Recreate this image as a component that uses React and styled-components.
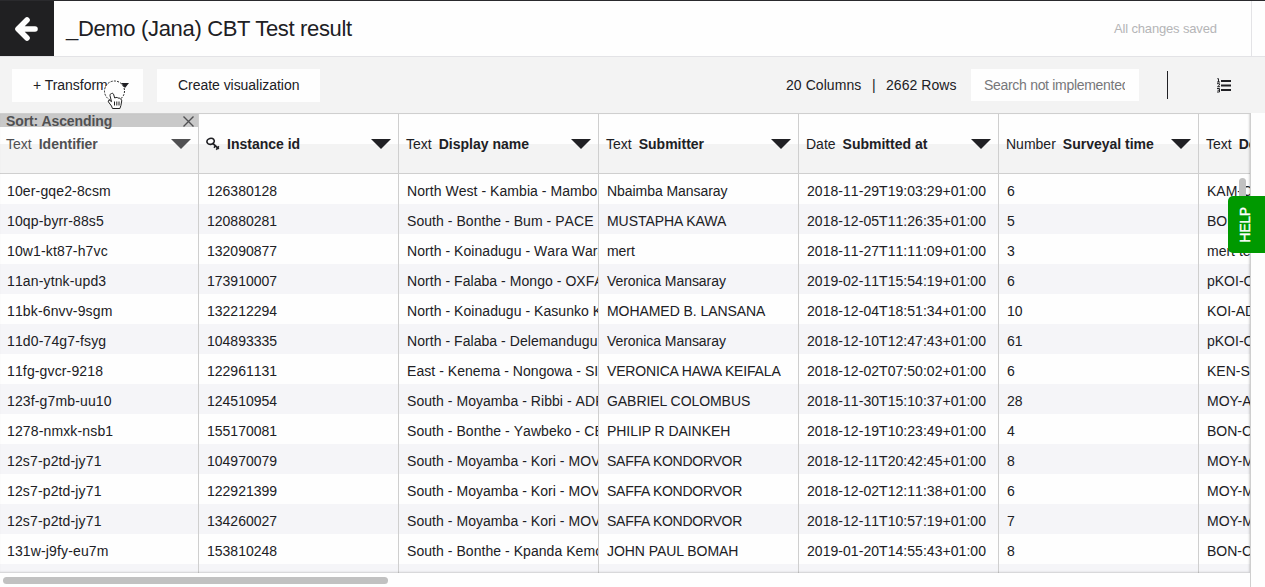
import React from 'react';
import styled, { createGlobalStyle } from 'styled-components';

const GlobalStyle = createGlobalStyle`
  * { box-sizing: border-box; }
  body {
    margin: 0;
    overflow: hidden;
    background: #fefefe;
    color: #202024;
    font-family: "Liberation Sans", Arial, sans-serif;
    font-size: 14px;
  }
`;

const Page = styled.div`
  position: relative;
  display: flex;
  flex-direction: column;
  width: 1265px;
  height: 587px;
  overflow: hidden;
`;

const TopBar = styled.header`
  display: flex;
  height: 57px;
  flex: none;
  border-top: 1px solid #2a2a2d;
  border-bottom: 1px solid #e3e3e6;
`;

const BackButton = styled.div`
  display: flex;
  align-items: center;
  justify-content: center;
  width: 54px;
  height: 55px;
  background: #202022;
`;

const Title = styled.h1`
  flex: 1;
  margin: 0;
  padding-left: 12px;
  font-size: 22px;
  font-weight: 400;
  line-height: 55px;
  letter-spacing: -0.33px;
  white-space: nowrap;
`;

const SaveState = styled.div`
  width: 138px;
  border-right: 1px solid #e3e3e6;
  color: #b5b5b7;
  font-size: 13px;
  line-height: 55px;
  letter-spacing: -0.16px;
  white-space: nowrap;
`;

const TopBarEnd = styled.div`
  width: 13px;
`;

const Toolbar = styled.div`
  display: flex;
  align-items: center;
  flex: none;
  height: 56px;
  padding-left: 12px;
  background: #f3f3f3;
`;

const ToolButton = styled.div`
  display: flex;
  align-items: center;
  justify-content: space-between;
  width: ${(p) => p.$width}px;
  height: 33px;
  margin-right: 14px;
  padding: 0 ${(p) => p.$right}px 0 21px;
  background: #fefefe;
  letter-spacing: -0.04px;
  white-space: nowrap;
`;

const SmallCaret = styled.span`
  border: 4px solid transparent;
  border-top: 5px solid #202024;
  border-bottom: 0;
`;

const Counts = styled.div`
  display: flex;
  margin-left: auto;
  white-space: nowrap;
`;

const CountItem = styled.div`
  width: ${(p) => p.$width}px;
  letter-spacing: 0.06px;
`;

const SearchBox = styled.div`
  width: 168px;
  height: 32px;
  padding: 0 14px 0 13px;
  background: #fefefe;
  color: #77777a;
  line-height: 32px;
`;

const SearchText = styled.div`
  overflow: hidden;
  white-space: nowrap;
  letter-spacing: -0.3px;
`;

const Divider = styled.div`
  width: 1px;
  height: 28px;
  margin: 0 49px 0 28px;
  background: #202024;
`;

const ListIcon = styled.svg`
  width: 15px;
  height: 16px;
  margin-right: 33px;
`;

const TableArea = styled.main`
  position: relative;
  flex: none;
  width: 1251px;
  height: 474px;
  overflow: hidden;
  border-right: 1px solid #cfcfcf;
`;

const Grid = styled.div`
  position: relative;
  height: 460px;
  overflow: hidden;
  border-top: 1px solid #cfcfcf;
  &::after {
    content: "";
    position: absolute;
    inset: 0;
    pointer-events: none;
    box-shadow: inset -1px -1px 2px rgba(0, 0, 0, 0.16);
  }
`;

const Line = styled.div`
  display: flex;
  width: 1400px;
  margin-left: -1px;
`;

const HeadCell = styled.div`
  position: relative;
  display: flex;
  align-items: center;
  width: 200px;
  height: 60px;
  padding: 0 7px;
  border-right: 1px solid #cfcfcf;
  border-bottom: 1px solid #cfcfcf;
  background: linear-gradient(#fefefe 50%, #f3f3f3 50%);
  color: ${(p) => (p.$sorted ? '#505052' : '#202024')};
  white-space: nowrap;
`;

const TypeLabel = styled.span`
  margin-right: 7px;
`;

const ColumnName = styled.b`
  letter-spacing: 0;
`;

const Caret = styled.span`
  margin-left: auto;
  border: 10px solid transparent;
  border-top: 10px solid currentColor;
  border-bottom: 0;
`;

const KeyIcon = styled.svg`
  width: 15px;
  height: 14px;
  margin-right: 6px;
`;

const SortTag = styled.div`
  position: absolute;
  top: 0;
  left: 0;
  right: 0;
  display: flex;
  align-items: center;
  justify-content: space-between;
  height: 13px;
  padding: 1px 4px 0 7px;
  background: #c9c9c9;
  color: #505052;
  font-weight: 700;
  line-height: 15px;
  letter-spacing: -0.1px;
`;

const Row = styled(Line)`
  background: ${(p) => (p.$odd ? '#f5f5f8' : '#fefefe')};
`;

const Cell = styled.div`
  width: 200px;
  height: 30px;
  padding: 2px 0 0 8px;
  overflow: hidden;
  border-right: 1px solid #cfcfcf;
  line-height: 30px;
  letter-spacing: ${(p) => p.$spacing}px;
  font-kerning: ${(p) => (p.$kern ? 'normal' : 'none')};
  white-space: nowrap;
`;

const VerticalThumb = styled.div`
  position: absolute;
  top: 65px;
  left: 1239px;
  width: 7px;
  height: 60px;
  border-radius: 4px;
  background: #c1c1c1;
`;

const HorizontalThumb = styled.div`
  width: 385px;
  height: 7px;
  margin: 4px 0 0 3px;
  border-radius: 4px;
  background: #c1c1c1;
`;

const HelpTab = styled.div`
  position: absolute;
  top: 196px;
  right: 0;
  display: flex;
  align-items: center;
  justify-content: center;
  width: 37px;
  height: 57px;
  padding-right: 4px;
  border-radius: 5px 0 0 5px;
  background: #009900;
  color: #fff;
  span {
    writing-mode: vertical-rl;
    transform: rotate(180deg);
    line-height: 16px;
    letter-spacing: -0.2px;
    -webkit-text-stroke: 0.35px #fff;
  }
`;

const Cursor = styled.svg`
  position: absolute;
  top: 80px;
  left: 103px;
  width: 24px;
  height: 32px;
`;

const cellSpacing = (value, column) => {
  if (column === 3) {
    return value.startsWith('SAFFA') ? -0.26 : value.length > 20 ? -0.17 : -0.06;
  }
  return [0.14, 0, 0.05, 0, 0.045, 0, 0][column];
};

const columns = [
  { type: 'Text', name: 'Identifier', sorted: true },
  { key: true, name: 'Instance id' },
  { type: 'Text', name: 'Display name' },
  { type: 'Text', name: 'Submitter' },
  { type: 'Date', name: 'Submitted at' },
  { type: 'Number', name: 'Surveyal time' },
  { type: 'Text', name: 'Device' },
];

const rows = [
  ['10er-gqe2-8csm', '126380128', 'North West - Kambia - Mambolo', 'Nbaimba Mansaray', '2018-11-29T19:03:29+01:00', '6', 'KAM-CBT'],
  ['10qp-byrr-88s5', '120880281', 'South - Bonthe - Bum - PACE', 'MUSTAPHA KAWA', '2018-12-05T11:26:35+01:00', '5', 'BON-CBT'],
  ['10w1-kt87-h7vc', '132090877', 'North - Koinadugu - Wara Wara', 'mert', '2018-11-27T11:11:09+01:00', '3', 'mert test'],
  ['11an-ytnk-upd3', '173910007', 'North - Falaba - Mongo - OXFAM', 'Veronica Mansaray', '2019-02-11T15:54:19+01:00', '6', 'pKOI-CBT'],
  ['11bk-6nvv-9sgm', '132212294', 'North - Koinadugu - Kasunko Ka', 'MOHAMED B. LANSANA', '2018-12-04T18:51:34+01:00', '10', 'KOI-ADP'],
  ['11d0-74g7-fsyg', '104893335', 'North - Falaba - Delemandugu', 'Veronica Mansaray', '2018-12-10T12:47:43+01:00', '61', 'pKOI-CBT'],
  ['11fg-gvcr-9218', '122961131', 'East - Kenema - Nongowa - SIL', 'VERONICA HAWA KEIFALA', '2018-12-02T07:50:02+01:00', '6', 'KEN-SIL'],
  ['123f-g7mb-uu10', '124510954', 'South - Moyamba - Ribbi - ADP', 'GABRIEL COLOMBUS', '2018-11-30T15:10:37+01:00', '28', 'MOY-ADP'],
  ['1278-nmxk-nsb1', '155170081', 'South - Bonthe - Yawbeko - CBT', 'PHILIP R DAINKEH', '2018-12-19T10:23:49+01:00', '4', 'BON-CBT'],
  ['12s7-p2td-jy71', '104970079', 'South - Moyamba - Kori - MOVE', 'SAFFA KONDORVOR', '2018-12-11T20:42:45+01:00', '8', 'MOY-MOV'],
  ['12s7-p2td-jy71', '122921399', 'South - Moyamba - Kori - MOVE', 'SAFFA KONDORVOR', '2018-12-02T12:11:38+01:00', '6', 'MOY-MOV'],
  ['12s7-p2td-jy71', '134260027', 'South - Moyamba - Kori - MOVE', 'SAFFA KONDORVOR', '2018-12-11T10:57:19+01:00', '7', 'MOY-MOV'],
  ['131w-j9fy-eu7m', '153810248', 'South - Bonthe - Kpanda Kemo', 'JOHN PAUL BOMAH', '2019-01-20T14:55:43+01:00', '8', 'BON-CBT'],
  ['', '', '', '', '', '', ''],
];

export default function App() {
  return (
    <Page>
      <GlobalStyle />
      <TopBar>
        <BackButton>
          <svg width="24" height="26" viewBox="0 0 24 26" fill="none" stroke="#fefefe" strokeWidth="5.6" strokeLinecap="round" strokeLinejoin="round">
            <path d="M12 4 3 13l9 9M5 13h15" />
          </svg>
        </BackButton>
        <Title>_Demo (Jana) CBT Test result</Title>
        <SaveState>All changes saved</SaveState>
        <TopBarEnd />
      </TopBar>
      <Toolbar>
        <ToolButton $width={131} $right={14}>+ Transform<SmallCaret /></ToolButton>
        <ToolButton $width={163} $right={12}>Create visualization</ToolButton>
        <Counts>
          <CountItem $width={86}>20 Columns</CountItem>
          <CountItem $width={14}>|</CountItem>
          <CountItem $width={85}>2662 Rows</CountItem>
        </Counts>
        <SearchBox><SearchText>Search not implemented</SearchText></SearchBox>
        <Divider />
        <ListIcon viewBox="0 0 15 16" fill="none" stroke="#202024">
          <path d="M4 4h10M4 8.500h10M4 13h10" strokeWidth="2" />
          <path d="M.3 1.700h1.200v3.300M0 5h3M0 6.700h2.500v1.300L.5 9.700H3M0 11.500h2.500v3.500H0M.5 13.200h2" strokeWidth="1" />
        </ListIcon>
      </Toolbar>
      <TableArea>
        <Grid>
          <Line>
            {columns.map((c) => (
              <HeadCell key={c.name} $sorted={c.sorted}>
                {c.sorted && (
                  <SortTag>
                    Sort: Ascending
                    <svg width="11" height="11" viewBox="0 0 11 11" stroke="#505052" strokeWidth="1.4">
                      <path d="M.5.5l10 10M10.500.5l-10 10" />
                    </svg>
                  </SortTag>
                )}
                {c.key ? (
                  <KeyIcon viewBox="0 0 15 14" fill="none" stroke="#202024">
                    <ellipse cx="4.600" cy="4.300" rx="3.700" ry="3" strokeWidth="1.600" transform="rotate(-15 4.600 4.300)" />
                    <path d="M6.500 6.200l6.300 5.600" strokeWidth="1.800" />
                    <path d="M9.500 8.800l-1.500 2M12.800 9.300l-2.500 3.500" strokeWidth="1.500" />
                  </KeyIcon>
                ) : (
                  <TypeLabel>{c.type}</TypeLabel>
                )}
                <ColumnName>{c.name}</ColumnName>
                <Caret />
              </HeadCell>
            ))}
          </Line>
          {rows.map((row, i) => (
            <Row key={i} $odd={i % 2 === 1}>
              {row.map((value, j) => (
                <Cell key={j} $spacing={cellSpacing(value, j)} $kern={j === 3 || j === 6}>{value}</Cell>
              ))}
            </Row>
          ))}
        </Grid>
        <HorizontalThumb />
        <VerticalThumb />
      </TableArea>
      <HelpTab><span>HELP</span></HelpTab>
      <Cursor viewBox="0 0 24 32" fill="none" stroke="#222">
        <circle cx="11.500" cy="11" r="10" fill="#fefefe" strokeDasharray="2 1.300" />
        <path d="M8.500 13.500c1-.8 2 .2 2.300 1.500l.9 3c2-1 3-.6 3.300.2 1.300-.5 2 0 2.200.8 1.200 0 1.600.8 1.500 2l-.8 4.500-1 3H9.500l-1-2.500-3-4c-.8-1.300.3-2.300 1.500-1.500l1.500 1.200-1.500-6c-.2-1.300.6-2 1.500-2.200z" fill="#fefefe" />
        <path d="M11.500 21.500v4M13.800 21.500v4M16 21.500v4" />
      </Cursor>
    </Page>
  );
}
